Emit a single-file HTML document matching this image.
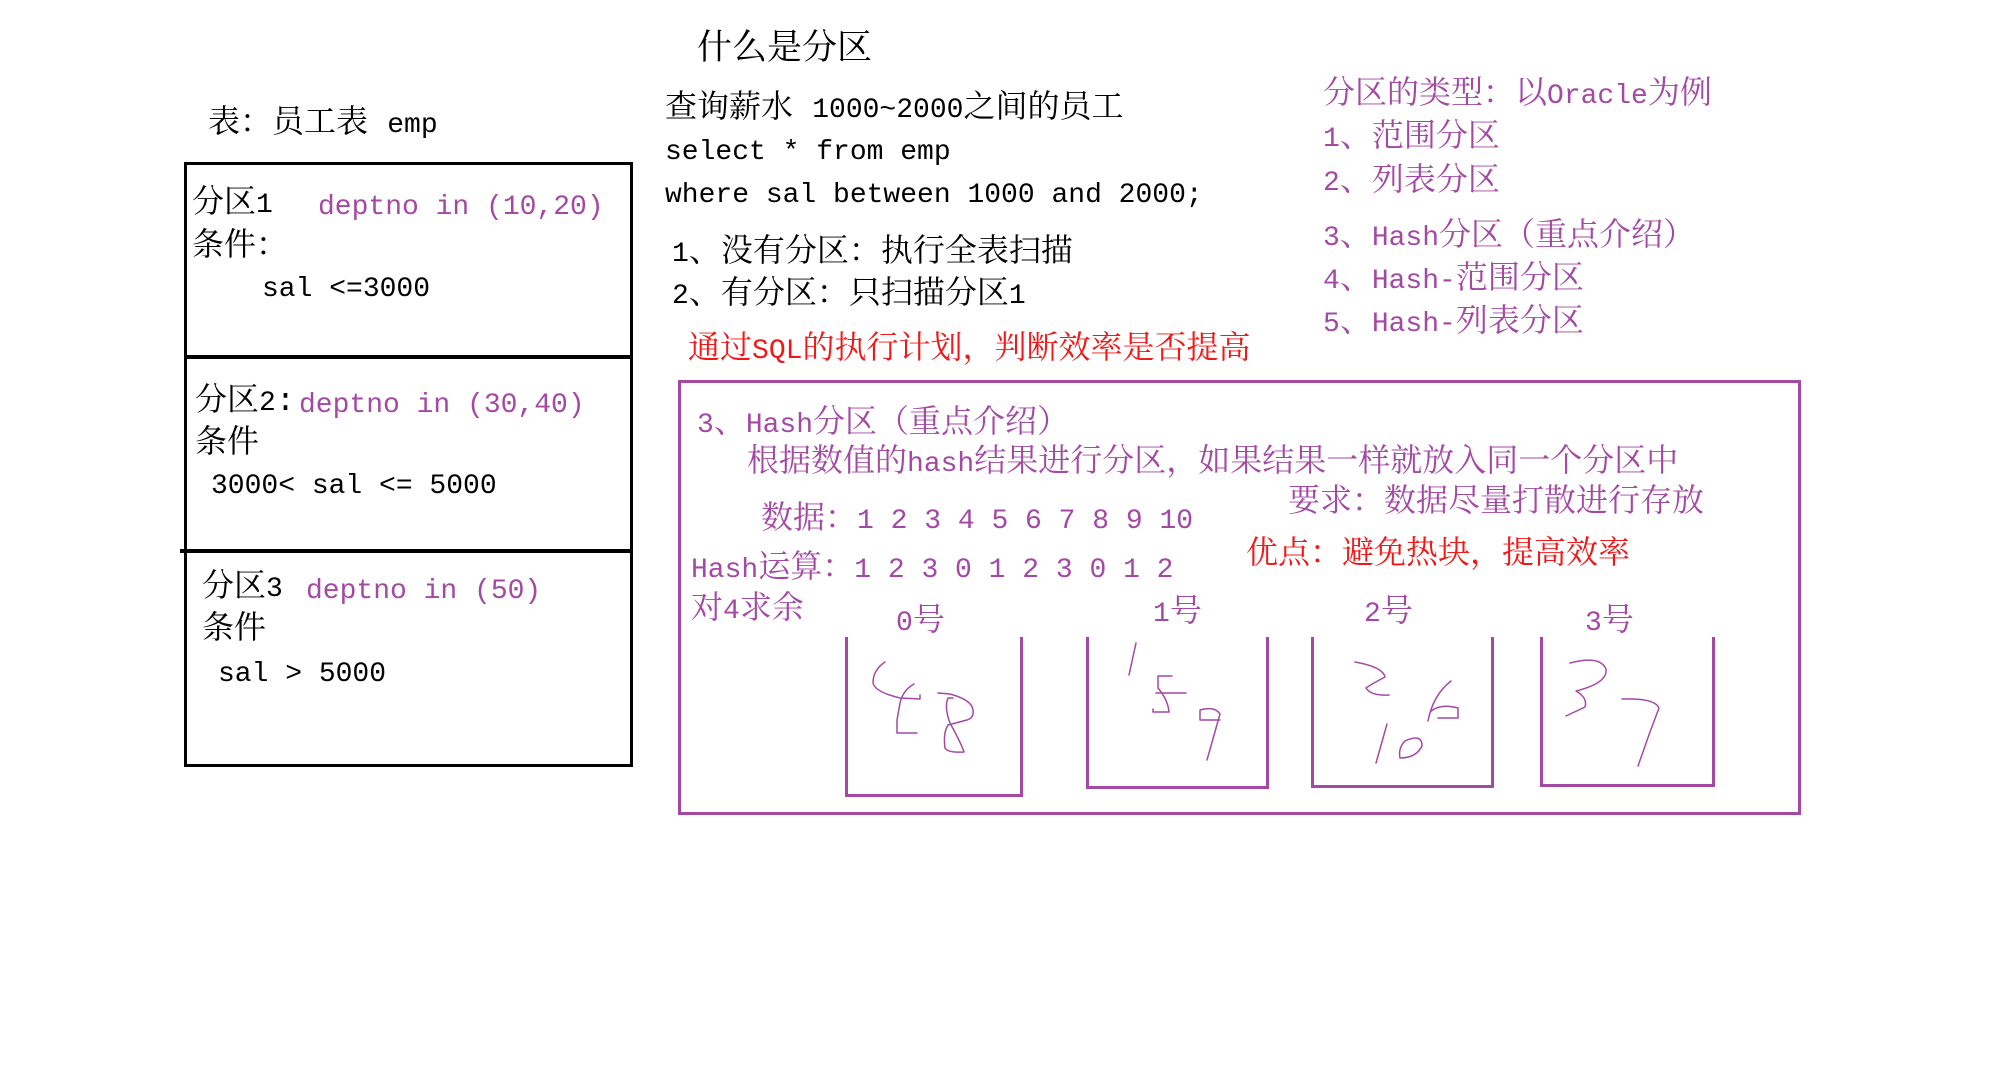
<!DOCTYPE html>
<html><head><meta charset="utf-8"><style>
html,body{margin:0;padding:0;background:#fff;}
body{width:2006px;height:1074px;position:relative;overflow:hidden;font-family:"Liberation Mono","Noto Serif CJK SC",serif;font-size:32px;color:#000;}
.t{position:absolute;white-space:pre;line-height:1;}
.p{color:#a349a4;}
.r{color:#f01818;}
.l{font-size:28px;}
.box{position:absolute;box-sizing:border-box;}
</style></head><body>
<div class="t" style="left:697px;top:33px;font-size:35px">什么是分区</div>
<div class="t" style="left:208px;top:108px">表：员工表 <span class="l">emp</span></div>

<div class="box" style="left:184px;top:162px;width:449px;height:605px;border:3px solid #000"></div>
<div class="box" style="left:184px;top:355px;width:449px;height:4px;background:#000"></div>
<div class="box" style="left:180px;top:549px;width:451px;height:4px;background:#000"></div>

<div class="t" style="left:192px;top:188px">分区<span class="l">1</span></div>
<div class="t p l" style="left:318px;top:194px">deptno in (10,20)</div>
<div class="t" style="left:192px;top:231px">条件：</div>
<div class="t l" style="left:262px;top:276px">sal &lt;=3000</div>
<div class="t" style="left:195px;top:386px">分区<span class="l">2</span>:</div>
<div class="t p l" style="left:299px;top:392px">deptno in (30,40)</div>
<div class="t" style="left:195px;top:428px">条件</div>
<div class="t l" style="left:211px;top:473px">3000&lt; sal &lt;= 5000</div>
<div class="t" style="left:202px;top:572px">分区<span class="l">3</span></div>
<div class="t p l" style="left:306px;top:578px">deptno in (50)</div>
<div class="t" style="left:202px;top:614px">条件</div>
<div class="t l" style="left:218px;top:661px">sal &gt; 5000</div>

<div class="t" style="left:665px;top:93px">查询薪水 <span class="l">1000~2000</span>之间的员工</div>
<div class="t l" style="left:665px;top:139px">select * from emp</div>
<div class="t l" style="left:665px;top:182px">where sal between 1000 and 2000;</div>
<div class="t" style="left:672px;top:237px"><span class="l">1</span>、没有分区：执行全表扫描</div>
<div class="t" style="left:672px;top:279px"><span class="l">2</span>、有分区：只扫描分区<span class="l">1</span></div>
<div class="t r" style="left:688px;top:334px">通过<span class="l">SQL</span>的执行计划，判断效率是否提高</div>

<div class="t p" style="left:1323px;top:79px">分区的类型：以<span class="l">Oracle</span>为例</div>
<div class="t p" style="left:1323px;top:122px"><span class="l">1</span>、范围分区</div>
<div class="t p" style="left:1323px;top:166px"><span class="l">2</span>、列表分区</div>
<div class="t p" style="left:1323px;top:221px"><span class="l">3</span>、<span class="l">Hash</span>分区（重点介绍）</div>
<div class="t p" style="left:1323px;top:264px"><span class="l">4</span>、<span class="l">Hash-</span>范围分区</div>
<div class="t p" style="left:1323px;top:307px"><span class="l">5</span>、<span class="l">Hash-</span>列表分区</div>

<div class="box" style="left:678px;top:380px;width:1123px;height:435px;border:3px solid #a349a4"></div>
<div class="t p" style="left:697px;top:408px"><span class="l">3</span>、<span class="l">Hash</span>分区（重点介绍）</div>
<div class="t p" style="left:747px;top:447px">根据数值的<span class="l">hash</span>结果进行分区，如果结果一样就放入同一个分区中</div>
<div class="t p" style="left:1288px;top:487px">要求：数据尽量打散进行存放</div>
<div class="t p" style="left:761px;top:504px">数据：<span class="l">1 2 3 4 5 6 7 8 9 10</span></div>
<div class="t p" style="left:691px;top:553px"><span class="l">Hash</span>运算：<span class="l">1 2 3 0 1 2 3 0 1 2</span></div>
<div class="t r" style="left:1246px;top:539px">优点：避免热块，提高效率</div>
<div class="t p" style="left:691px;top:594px">对<span class="l">4</span>求余</div>
<div class="t p" style="left:896px;top:606px"><span class="l">0</span>号</div>
<div class="t p" style="left:1153px;top:597px"><span class="l">1</span>号</div>
<div class="t p" style="left:1364px;top:597px"><span class="l">2</span>号</div>
<div class="t p" style="left:1585px;top:606px"><span class="l">3</span>号</div>

<div class="box" style="left:845px;top:637px;width:178px;height:160px;border:3px solid #a349a4;border-top:none"></div>
<div class="box" style="left:1086px;top:637px;width:183px;height:152px;border:3px solid #a349a4;border-top:none"></div>
<div class="box" style="left:1311px;top:637px;width:183px;height:151px;border:3px solid #a349a4;border-top:none"></div>
<div class="box" style="left:1540px;top:637px;width:175px;height:150px;border:3px solid #a349a4;border-top:none"></div>

<svg style="position:absolute;left:0;top:0" width="2006" height="1074" fill="none" stroke="#a349a4" stroke-width="1.5" stroke-linejoin="round" stroke-linecap="round">
<path d="M885 662 Q873 670 873 683 Q875 692 900 698 L920 699 L920 695"/>
<path d="M914 684 Q903 690 900 703 L897 720 L897 733 L917 733"/>
<path d="M938 693 L950 694 Q972 700 973 710 Q974 718 967 720 L948 725 Q943 733 945 748 Q948 753 964 752 Q962 745 950 723 Q944 707 948 698 L953 698"/>
<path d="M1136 643 L1129 675"/>
<path d="M1172 676 L1158 676 L1158 688 Q1168 700 1169 712 L1153 712 L1153 709 M1156 693 L1186 693"/>
<path d="M1220 720 L1200 720 L1200 710 Q1215 706 1220 714 L1207 760"/>
<path d="M1355 662 Q1383 667 1385 677 Q1370 685 1366 688 Q1371 696 1389 695"/>
<path d="M1451 681 Q1433 695 1428 721 M1430 712 Q1440 703 1458 708 L1458 718 L1438 718"/>
<path d="M1387 724 L1376 763"/>
<path d="M1405 741 Q1422 733 1422 746 Q1416 758 1400 758 Q1398 748 1405 741"/>
<path d="M1570 663 Q1600 655 1606 669 Q1608 683 1576 691 Q1588 698 1585 707 L1566 716"/>
<path d="M1622 699 Q1655 698 1659 708 L1650 732 L1638 766"/>
</svg>
</body></html>
